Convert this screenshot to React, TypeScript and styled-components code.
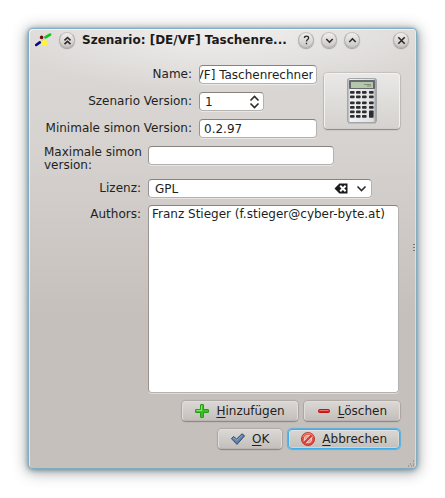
import React, { useEffect, useRef, useState } from "react";
import styled, { createGlobalStyle } from "styled-components";

const GlobalStyle = createGlobalStyle`
  *, *::before, *::after { box-sizing: border-box; }
  body { margin: 0; background: #fff; }
  body, button, input, select {
    font-family: "DejaVu Sans", Verdana, sans-serif;
    font-size: 12px;
    line-height: 14px;
    color: #221f1e;
  }
`;

const Desktop = styled.div`
  padding: 29px;
`;

const Dialog = styled.main`
  position: relative;
  border-radius: 4px;
  background:
    radial-gradient(ellipse 230px 64px at 50% 0, rgba(255, 255, 255, 0.6), rgba(255, 255, 255, 0)),
    linear-gradient(#dcd9d7, #d6d2cf 120px, #c6c0bc 285px);
  box-shadow:
    inset 1px 1px 0 rgba(255, 255, 255, 0.6),
    inset -1px 0 0 rgba(255, 255, 255, 0.4),
    0 0 1px 1px #7fadc6,
    0 1px 5px 1px rgba(80, 120, 145, 0.75),
    0 2px 14px 3px rgba(70, 70, 70, 0.45);
`;

const TitleBar = styled.header`
  display: flex;
  align-items: center;
  gap: 7px;
  height: 22px;
  padding: 0 7px 0 6px;
`;

const Title = styled.h1`
  flex: 1;
  min-width: 0;
  margin: 0;
  white-space: nowrap;
  font-size: 12px;
  line-height: 18px;
  font-weight: bold;
  color: #1c1a19;
`;

const RoundButton = styled.button`
  display: grid;
  place-items: center;
  flex: none;
  width: 16px;
  height: 16px;
  padding: 0;
  border: 1px solid #b3afac;
  border-top-color: #c6c2bf;
  border-radius: 50%;
  background: linear-gradient(#f0efee, #cbc7c4);
  box-shadow: 0 1px 1px rgba(0, 0, 0, 0.3);
`;

const CloseSlot = styled.div`
  margin-left: 26px;
`;

const Body = styled.form`
  display: flex;
  flex-direction: column;
  padding: 14px 16px 19px 15px;
`;

const Summary = styled.div`
  display: flex;
  align-items: flex-start;
  gap: 7px;
`;

const SummaryFields = styled.div`
  flex: 1;
  min-width: 0;
  display: grid;
  grid-template-columns: 151px 1fr;
  column-gap: 4px;
  row-gap: 8px;
  align-items: center;
`;

const DetailFields = styled.div`
  display: grid;
  grid-template-columns: 100px 1fr;
  column-gap: 4px;
  row-gap: 7px;
  margin-top: 8px;
  align-items: start;
`;

const Label = styled.label<{ $wrap?: boolean }>`
  padding: ${(p) => (p.$wrap ? "0" : "2px 3px 3px 0")};
  text-align: ${(p) => (p.$wrap ? "left" : "right")};
  white-space: ${(p) => (p.$wrap ? "normal" : "nowrap")};
  line-height: ${(p) => (p.$wrap ? "13px" : "14px")};
`;

const frame = `
  border: 1px solid #b5b1ae;
  border-top-color: #85827f;
  border-left-color: #989491;
  border-radius: 4px;
  background: #fff;
  box-shadow: 0 1px 0 rgba(255, 255, 255, 0.45);
`;

const TextInput = styled.input<{ $tight?: boolean }>`
  ${frame}
  width: 100%;
  height: 19px;
  padding: ${(p) => (p.$tight ? "0 3px 0 0" : "0 4px")};
  outline: none;
`;

const ShortInput = styled(TextInput)`
  width: 186px;
`;

const SpinFrame = styled.div`
  ${frame}
  display: flex;
  align-items: center;
  width: 65px;
  height: 19px;
  padding: 0 3px 0 5px;
`;

const SpinInput = styled.input`
  flex: 1;
  min-width: 0;
  padding: 0;
  border: 0;
  outline: none;
  background: transparent;
  appearance: textfield;
  &::-webkit-inner-spin-button { appearance: none; }
`;

const SpinButtons = styled.div`
  display: flex;
  flex-direction: column;
`;

const GlyphButton = styled.button`
  display: block;
  padding: 0;
  border: 0;
  background: transparent;
  svg { display: block; }
`;

const ComboFrame = styled.div`
  ${frame}
  display: flex;
  align-items: center;
  gap: 7px;
  width: 224px;
  height: 19px;
  padding: 0 4px 0 6px;
  svg { display: block; }
`;

const ComboSelect = styled.select`
  flex: 1;
  min-width: 0;
  padding: 0;
  border: 0;
  outline: none;
  appearance: none;
  background: transparent;
`;

const AuthorList = styled.select`
  ${frame}
  display: block;
  width: calc(100% - 1px);
  height: 188px;
  padding: 0 1px;
  outline: none;
  overflow: hidden;
  option { padding: 1px 2px; }
`;

const PictureButton = styled.button`
  display: grid;
  place-items: center;
  flex: none;
  width: 76px;
  height: 56px;
  margin-top: 8px;
  padding: 0;
  border: 1px solid #f3f2f1;
  border-bottom-color: #d0cdca;
  border-radius: 4px;
  background: linear-gradient(#e9e8e6, #d5d2cf);
  box-shadow: 0 1px 1px #8b8784, 0 0 1px 1px rgba(130, 125, 120, 0.25);
`;

const ButtonRow = styled.div`
  display: flex;
  justify-content: flex-end;
  gap: 6px;
  margin-top: 8px;
`;

const PushButton = styled.button<{ $focus?: boolean }>`
  display: flex;
  align-items: center;
  gap: 6px;
  height: 20px;
  padding: 0 12px 0 11px;
  border: 1px solid ${(p) => (p.$focus ? "#3daee9" : "#e0dedc")};
  border-bottom-color: ${(p) => (p.$focus ? "#3daee9" : "#b8b4b1")};
  border-radius: 4px;
  background: linear-gradient(#dad7d5, #c4bfbb);
  box-shadow: ${(p) =>
    p.$focus
      ? "0 0 1px 1px #56b2e0, inset 0 0 0 1px rgba(255, 255, 255, 0.3)"
      : "0 1px 1px #8b8784, 0 0 1px 1px rgba(120, 115, 110, 0.3)"};
  white-space: nowrap;
  u { text-underline-offset: 2px; }
`;

const SplitGrip = styled.svg`
  position: absolute;
  right: 1px;
  top: 49%;
`;

const CornerGrip = styled.svg`
  position: absolute;
  right: 1px;
  bottom: 1px;
`;

const Chevron = ({ d, w = 9, h = 9 }: { d: string; w?: number; h?: number }) => (
  <svg width={w} height={h} viewBox={`0 0 ${w} ${h}`} fill="none" stroke="#2d2a29" strokeWidth="1.6" aria-hidden="true">
    <path d={d} />
  </svg>
);

const AppIcon = () => (
  <svg width="17" height="14" viewBox="0 0 17 14" aria-hidden="true">
    <path d="M9 5.6 6.6 8" stroke="#b9b6b8" strokeWidth="1" />
    <path d="M10.6 4.2 15 1.6" stroke="#12c51d" strokeWidth="2.8" strokeLinecap="round" />
    <path d="M1.2 12 4.8 9.4" stroke="#0b0b7c" strokeWidth="2.6" strokeLinecap="round" />
    <circle cx="6.6" cy="4.4" r="1.8" fill="#6b0f12" />
    <circle cx="9.6" cy="10" r="3" fill="#fff43a" />
  </svg>
);

const HelpIcon = () => (
  <svg width="9" height="10" viewBox="0 0 9 10" fill="none" stroke="#2d2a29" strokeWidth="1.3" aria-hidden="true">
    <path d="M2.4 3C2.4 .6 6.6 .6 6.6 3 6.6 4.5 4.5 4.6 4.5 6.4M4.5 7.7V9.2" />
  </svg>
);

const ClearIcon = () => (
  <svg width="15" height="11" viewBox="0 0 15 11" aria-hidden="true">
    <path d="M.5 5.5 5.4 .5H13.500V10.500H5.4Z" fill="#1b1b1b" />
    <path d="M6.2 2.8 11.600 8.2M11.600 2.8 6.2 8.2" stroke="#fff" strokeWidth="2" />
  </svg>
);

const PlusIcon = () => (
  <svg width="16" height="16" viewBox="0 0 16 16" aria-hidden="true">
    <path
      d="M7 1.5h2q.5 0 .5.5v4.5h4.5q.5 0 .5.5v2q0 .5-.5.5h-4.5v4.5q0 .5-.5.5h-2q-.5 0-.5-.5v-4.5h-4.5q-.5 0-.5-.5v-2q0-.5.5-.5h4.5v-4.5q0-.5.5-.5z"
      fill="#35c41d"
      stroke="#2a9a1a"
    />
    <path d="M7.5 2.5v5h-5" fill="none" stroke="#8fe872" />
  </svg>
);

const MinusIcon = () => (
  <svg width="16" height="16" viewBox="0 0 16 16" aria-hidden="true">
    <rect x="2.5" y="6.5" width="11" height="3" rx="1" fill="#e01818" stroke="#c01414" />
    <path d="M3.5 7.5h9" stroke="#f07070" />
  </svg>
);

const CheckIcon = () => (
  <svg width="16" height="16" viewBox="0 0 16 16" aria-hidden="true">
    <path
      d="M1.4 7.6 3.6 5.6 6.6 8 12 2.8 14.6 4.8 7 13.4Z"
      fill="#5f80a8"
      stroke="#2f4a6c"
      strokeLinejoin="round"
    />
    <path d="M2.8 7.8 3.8 6.9 6.8 9.4 12.2 4.2" fill="none" stroke="#8fabca" />
  </svg>
);

const CancelIcon = () => (
  <svg width="16" height="16" viewBox="0 0 16 16" aria-hidden="true">
    <circle cx="8" cy="8" r="6.6" fill="#dd4a40" stroke="#b5322b" strokeWidth="0.8" />
    <circle cx="8" cy="8" r="3.8" fill="#dd8f89" stroke="#f3cfcb" strokeWidth="1" />
    <path d="M4.6 11.4 11.4 4.6" stroke="#f6d8d5" strokeWidth="4" />
    <path d="M3.9 12.1 12.1 3.9" stroke="#d63c32" strokeWidth="2.2" />
    <path d="M2.6 6A5.8 5.8 0 0 1 13.4 6" fill="none" stroke="#ee9089" strokeWidth="0.9" />
  </svg>
);

const keyColumns = [3, 9, 15, 22];
const keyRows = [13, 17.4, 23.4, 28, 32.4, 37];

const CalculatorIcon = () => (
  <svg width="30" height="46" viewBox="0 0 30 46" aria-hidden="true">
    <defs>
      <linearGradient id="calc-case" x1="0" x2="1">
        <stop offset="0" stopColor="#a2a4a8" />
        <stop offset="0.1" stopColor="#f2f2f3" />
        <stop offset="0.88" stopColor="#dedfe1" />
        <stop offset="1" stopColor="#8f9195" />
      </linearGradient>
    </defs>
    <rect x="1" y="43" width="28" height="2.5" rx="1" fill="#8b8885" opacity="0.6" />
    <rect x="0.5" y="0.5" width="29" height="44" rx="2" fill="url(#calc-case)" stroke="#a3a5a9" />
    <rect x="2" y="2" width="26" height="9" rx="1" fill="#65686d" />
    <rect x="4" y="4" width="22" height="6" fill="#b4c7ab" />
    <path d="M17 6.5h7M20 8h4" stroke="#7d8f77" />
    {keyRows.map((y, row) =>
      keyColumns.map((x, col) =>
        col === 3 && row > 3 ? null : (
          <rect key={`${x}-${y}`} x={x} y={y} width="4.6" height="2.8" rx="0.8" fill="#2c2d30" />
        )
      )
    )}
    <rect x="22" y="32.4" width="4.6" height="7.4" rx="0.8" fill="#2c2d30" />
  </svg>
);

export default function App() {
  const nameRef = useRef<HTMLInputElement>(null);
  const [license, setLicense] = useState("GPL");
  const [version, setVersion] = useState(1);

  useEffect(() => {
    const input = nameRef.current;
    if (input) input.scrollLeft = input.scrollWidth;
  }, []);

  return (
    <>
      <GlobalStyle />
      <Desktop>
        <Dialog>
          <TitleBar>
            <AppIcon />
            <RoundButton type="button" aria-label="Fenster einrollen">
              <Chevron d="M1.5 4.3 4.5 1.5 7.5 4.3M1.5 8.1 4.5 5.3 7.5 8.1" />
            </RoundButton>
            <Title>Szenario: [DE/VF] Taschenre...</Title>
            <RoundButton type="button" aria-label="Hilfe">
              <HelpIcon />
            </RoundButton>
            <RoundButton type="button" aria-label="Minimieren">
              <Chevron d="M1.3 3 4.5 6.2 7.7 3" />
            </RoundButton>
            <RoundButton type="button" aria-label="Maximieren">
              <Chevron d="M1.3 6 4.5 2.8 7.7 6" />
            </RoundButton>
            <CloseSlot>
              <RoundButton type="button" aria-label="Schließen">
                <Chevron d="M1.3 1.3 7.7 7.7M7.7 1.3 1.3 7.7" />
              </RoundButton>
            </CloseSlot>
          </TitleBar>

          <Body onSubmit={(e) => e.preventDefault()}>
            <Summary>
              <SummaryFields>
                <Label htmlFor="name">Name:</Label>
                <TextInput id="name" ref={nameRef} $tight defaultValue="[DE/VF] Taschenrechner" />
                <Label htmlFor="version">Szenario Version:</Label>
                <SpinFrame>
                  <SpinInput
                    id="version"
                    type="number"
                    value={version}
                    onChange={(e) => setVersion(Number(e.target.value))}
                  />
                  <SpinButtons>
                    <GlyphButton type="button" aria-label="Erhöhen" onClick={() => setVersion(version + 1)}>
                      <Chevron w={11} h={7} d="M1.5 5.5 5.5 1.5 9.5 5.5" />
                    </GlyphButton>
                    <GlyphButton type="button" aria-label="Verringern" onClick={() => setVersion(version - 1)}>
                      <Chevron w={11} h={7} d="M1.5 1.5 5.5 5.5 9.5 1.5" />
                    </GlyphButton>
                  </SpinButtons>
                </SpinFrame>
                <Label htmlFor="min">Minimale simon Version:</Label>
                <TextInput id="min" defaultValue="0.2.97" />
              </SummaryFields>
              <PictureButton type="button" aria-label="Symbol wählen">
                <CalculatorIcon />
              </PictureButton>
            </Summary>

            <DetailFields>
              <Label htmlFor="max" $wrap>
                Maximale simon version:
              </Label>
              <ShortInput id="max" defaultValue="" />
              <Label htmlFor="license">Lizenz:</Label>
              <ComboFrame>
                <ComboSelect id="license" value={license} onChange={(e) => setLicense(e.target.value)}>
                  <option value=""></option>
                  <option value="GPL">GPL</option>
                </ComboSelect>
                <GlyphButton type="button" aria-label="Lizenz leeren" onClick={() => setLicense("")}>
                  <ClearIcon />
                </GlyphButton>
                <Chevron w={11} h={9} d="M1.5 2.5 5.5 6.5 9.5 2.5" />
              </ComboFrame>
              <Label htmlFor="authors">Authors:</Label>
              <AuthorList id="authors" size={10}>
                <option>Franz Stieger (f.stieger@cyber-byte.at)</option>
              </AuthorList>
            </DetailFields>

            <ButtonRow>
              <PushButton type="button">
                <PlusIcon />
                <span><u>H</u>inzufügen</span>
              </PushButton>
              <PushButton type="button">
                <MinusIcon />
                <span><u>L</u>öschen</span>
              </PushButton>
            </ButtonRow>
            <ButtonRow>
              <PushButton type="submit">
                <CheckIcon />
                <span><u>O</u>K</span>
              </PushButton>
              <PushButton type="button" $focus>
                <CancelIcon />
                <span><u>A</u>bbrechen</span>
              </PushButton>
            </ButtonRow>
          </Body>

          <SplitGrip width="2" height="8" viewBox="0 0 2 8" aria-hidden="true">
            <path d="M1 0v1M1 3v1M1 6v1" stroke="#7d7976" strokeWidth="2" />
          </SplitGrip>
          <CornerGrip width="7" height="7" viewBox="0 0 7 7" aria-hidden="true">
            <path d="M5 1h1M5 4h1M2 4h1M0 6h1M3 6h1M5 6h1" stroke="#7d7976" />
          </CornerGrip>
        </Dialog>
      </Desktop>
    </>
  );
}
